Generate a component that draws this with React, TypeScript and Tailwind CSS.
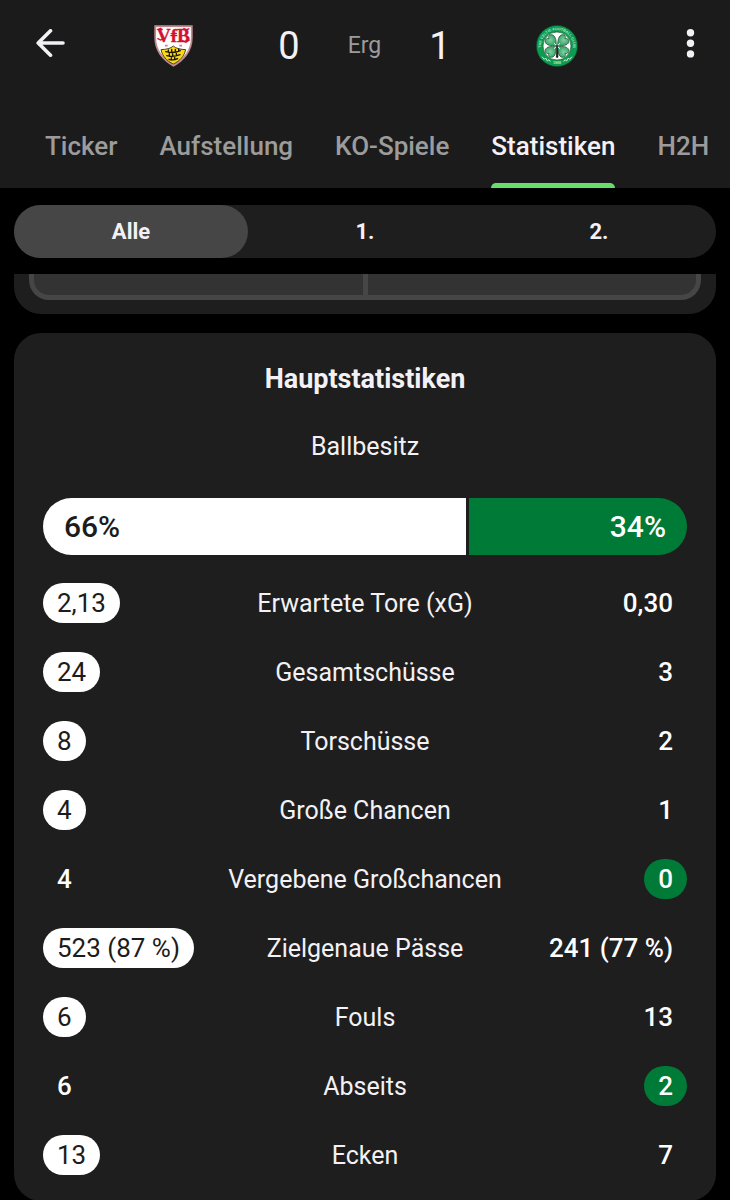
import { useState } from "react";
import clsx from "clsx";

type Stat = {
  label: string;
  home: string;
  away: string;
  leader: "home" | "away";
};

const tabs = ["Ticker", "Aufstellung", "KO-Spiele", "Statistiken", "H2H"];
const periods = ["Alle", "1.", "2."];

const possession = { home: 66, away: 34 };

const stats: Stat[] = [
  { label: "Erwartete Tore (xG)", home: "2,13", away: "0,30", leader: "home" },
  { label: "Gesamtschüsse", home: "24", away: "3", leader: "home" },
  { label: "Torschüsse", home: "8", away: "2", leader: "home" },
  { label: "Große Chancen", home: "4", away: "1", leader: "home" },
  { label: "Vergebene Großchancen", home: "4", away: "0", leader: "away" },
  { label: "Zielgenaue Pässe", home: "523 (87 %)", away: "241 (77 %)", leader: "home" },
  { label: "Fouls", home: "6", away: "13", leader: "home" },
  { label: "Abseits", home: "6", away: "2", leader: "away" },
  { label: "Ecken", home: "13", away: "7", leader: "home" },
];

const BackIcon = () => (
  <svg viewBox="0 0 30 30" className="h-[30px] w-[30px]" fill="none" stroke="currentColor" strokeWidth="3.6" strokeLinecap="round" strokeLinejoin="round">
    <path d="M27 14H2.500M14.500 1.800 2.200 14 14.500 26.200" />
  </svg>
);

const MoreIcon = () => (
  <svg viewBox="0 0 30 30" className="h-[30px] w-[30px]" fill="currentColor">
    <circle cx="24.5" cy="3.8" r="3.7" />
    <circle cx="24.5" cy="14.3" r="3.7" />
    <circle cx="24.5" cy="24.9" r="3.7" />
  </svg>
);

const StuttgartCrest = () => (
  <svg viewBox="0 0 117 126" className="h-[42px] w-[39px]" role="img" aria-label="VfB Stuttgart">
    <path d="M1 1H116V38C116 78 92 106 58.500 125C25 106 1 78 1 38Z" fill="#c98c92" />
    <path d="M5 5H112V38C112 75 90 101 58.500 119C27 101 5 75 5 38Z" fill="#fff" stroke="#8b5a5e" strokeWidth="1.500" />
    <text x="58" y="50" textAnchor="middle" fontFamily="Liberation Serif, serif" fontWeight="700" fontSize="58" fill="#d3122f" stroke="#d3122f" strokeWidth="1">
      VfB
    </text>
    {/* flourishes on the lettering */}
    <path d="M12 14 20 10 25 16M10 40 20 45 30 40M88 10 98 14 106 11M84 46 96 52 107 44M49 32H70" fill="none" stroke="#d3122f" strokeWidth="4" />
    <path d="M33 62H41M76 62H84" stroke="#d9788a" strokeWidth="5" />
    <path d="M21 74C36 73 50 71 58 63C66 71 80 73 95 74C91 93 78 108 58 117C38 108 25 93 21 74Z" fill="#fbd914" stroke="#2b2410" strokeWidth="2.500" />
    <g fill="none" stroke="#1b1708" strokeWidth="4" strokeLinecap="round">
      <path d="M35 80Q58 86 79 77M43 75V82M53 73V83M64 73V82M74 72V79" />
      <path d="M38 92Q58 97 78 89M46 86V94M56 86V95M67 85V92" />
      <path d="M45 103Q59 107 71 101M52 98V105M62 97V104" />
    </g>
  </svg>
);

const CelticCrest = () => (
  <svg viewBox="0 0 126 126" className="h-[42px] w-[42px]" role="img" aria-label="Celtic FC">
    <defs>
      <path id="ring" d="M18 80A48 48 0 1 1 108 80" />
      <path id="leaf" d="M63 60C51 50 43 38 48 29C53 22 61 24 63 31C65 24 73 22 78 29C83 38 75 50 63 60Z" />
      <radialGradient id="leafFill" cx="50%" cy="30%" r="70%">
        <stop offset="0" stopColor="#86cfa2" />
        <stop offset="1" stopColor="#169553" />
      </radialGradient>
    </defs>
    <circle cx="63" cy="63" r="62" fill="#0e9a50" stroke="#0a3f24" strokeWidth="2" />
    <circle cx="63" cy="63" r="42" fill="#fff" stroke="#14532f" strokeWidth="2" />
    <text fontFamily="Liberation Sans, sans-serif" fontWeight="700" fontSize="11" fill="#b5e6c8">
      <textPath href="#ring" startOffset="50%" textAnchor="middle">THE CELTIC FOOTBALL CLUB</textPath>
    </text>
    <text x="63" y="118" textAnchor="middle" fontFamily="Liberation Sans, sans-serif" fontWeight="700" fontSize="11" fill="#b5e6c8">1888</text>
    <path d="M18 95 25 103 29 99 34 108 39 104 43 110M108 95 101 103 97 99 92 108 87 104 83 110" fill="none" stroke="#e8fff0" strokeWidth="2.500" />
    <g fill="url(#leafFill)" stroke="#174d30" strokeWidth="2">
      <use href="#leaf" transform="rotate(-48 63 63)" />
      <use href="#leaf" transform="rotate(48 63 63)" />
      <use href="#leaf" transform="rotate(132 63 63)" />
      <use href="#leaf" transform="rotate(-132 63 63)" />
    </g>
    <path d="M63 63 54 55M63 63 72 55M63 63 54 71M63 63 72 71" stroke="#fff" strokeWidth="3" />
    <path d="M63 64 61 97H66L65 76Z" fill="#111" stroke="#111" strokeWidth="2" />
    <circle cx="63" cy="63" r="3" fill="#111" />
  </svg>
);

const StatValue = ({ value, side, leading }: { value: string; side: "home" | "away"; leading: boolean }) => (
  <span
    className={clsx(
      "inline-flex h-10 items-center rounded-full px-3.5 pt-0.5 whitespace-nowrap",
      leading && side === "home" && "bg-white text-[#1c1c1c]",
      leading && side === "away" && "bg-[#007a37] font-medium text-white",
      !leading && "font-medium text-white"
    )}
  >
    {value}
  </span>
);

const App = () => {
  const [activeTab, setActiveTab] = useState("Statistiken");
  const [period, setPeriod] = useState("Alle");

  return (
    <div className="min-h-screen overflow-hidden bg-black font-[Roboto,sans-serif] text-[#f3f1f5]">
      <header className="bg-[#1b1b1b]">
        <div className="flex h-[88px] items-center justify-between pr-[34px] pl-9">
          <button aria-label="Zurück">
            <BackIcon />
          </button>
          <div className="flex items-center gap-[85px] pt-1">
            <StuttgartCrest />
            <div className="flex items-center gap-12 text-[38px] leading-10">
              <span>0</span>
              <span className="text-[23px] text-[#9c9c9c]">Erg</span>
              <span>1</span>
            </div>
            <CelticCrest />
          </div>
          <button aria-label="Mehr">
            <MoreIcon />
          </button>
        </div>

        <nav className="flex h-[100px] gap-[42px] overflow-hidden pl-[45px] text-[26px] font-medium">
          {tabs.map((tab) => (
            <button
              key={tab}
              onClick={() => setActiveTab(tab)}
              className={clsx(
                "flex shrink-0 flex-col justify-between pt-10",
                activeTab === tab ? "text-[#f3f1f5]" : "text-[#9c9c9c]"
              )}
            >
              <span className="leading-9">{tab}</span>
              <span className={clsx("h-[5px] w-full rounded-t-full", activeTab === tab && "bg-[#67dd6c]")} />
            </button>
          ))}
        </nav>
      </header>

      <main className="px-3.5 pt-[17px]">
        <div className="flex h-[53px] rounded-full bg-[#1e1e1e] text-[22px] font-bold">
          {periods.map((p) => (
            <button
              key={p}
              onClick={() => setPeriod(p)}
              className={clsx("flex-1 rounded-full", period === p && "bg-[#464646]")}
            >
              {p}
            </button>
          ))}
        </div>

        {/* lower edge of the card that scrolls under the filter */}
        <div className="mt-4 rounded-b-[27px] bg-[#1e1e1e] px-[15px] pb-3.5">
          <div className="flex h-[26px] rounded-b-[20px] border-x-5 border-b-5 border-[#464646] bg-[#333333]">
            <div className="flex-1 border-r-5 border-[#464646]" />
            <div className="flex-1" />
          </div>
        </div>

        <section className="mt-[19px] rounded-[27px] bg-[#1e1e1e] px-[29px] pt-7 pb-3">
          <h2 className="text-center text-[27px] leading-9 font-bold">Hauptstatistiken</h2>
          <h3 className="mt-8 text-center text-[25px] leading-9">Ballbesitz</h3>

          <div className="mt-[33px] flex h-[57px] gap-[3px] overflow-hidden rounded-full text-[30px] font-medium">
            <div className="flex items-center bg-white text-[#1c1c1c]" style={{ flexGrow: possession.home, flexBasis: 0 }}>
              <span className="ml-[21px]">{possession.home}%</span>
            </div>
            <div className="flex items-center justify-end bg-[#007a37] text-white" style={{ flexGrow: possession.away, flexBasis: 0 }}>
              <span className="mr-[21px]">{possession.away}%</span>
            </div>
          </div>

          <table className="mt-[13px] w-full table-fixed text-[26px]">
            <tbody>
              {stats.map((stat) => (
                <tr key={stat.label} className="h-[69px]">
                  <td className="w-1/4 p-0 text-left align-middle">
                    <div className="flex">
                      <StatValue value={stat.home} side="home" leading={stat.leader === "home"} />
                    </div>
                  </td>
                  <th scope="row" className="p-0 pt-0.5 text-center align-middle text-[25px] font-normal">
                    {stat.label}
                  </th>
                  <td className="w-1/4 p-0 align-middle">
                    <div className="flex justify-end">
                      <StatValue value={stat.away} side="away" leading={stat.leader === "away"} />
                    </div>
                  </td>
                </tr>
              ))}
            </tbody>
          </table>
        </section>
      </main>
    </div>
  );
};

export default App;
